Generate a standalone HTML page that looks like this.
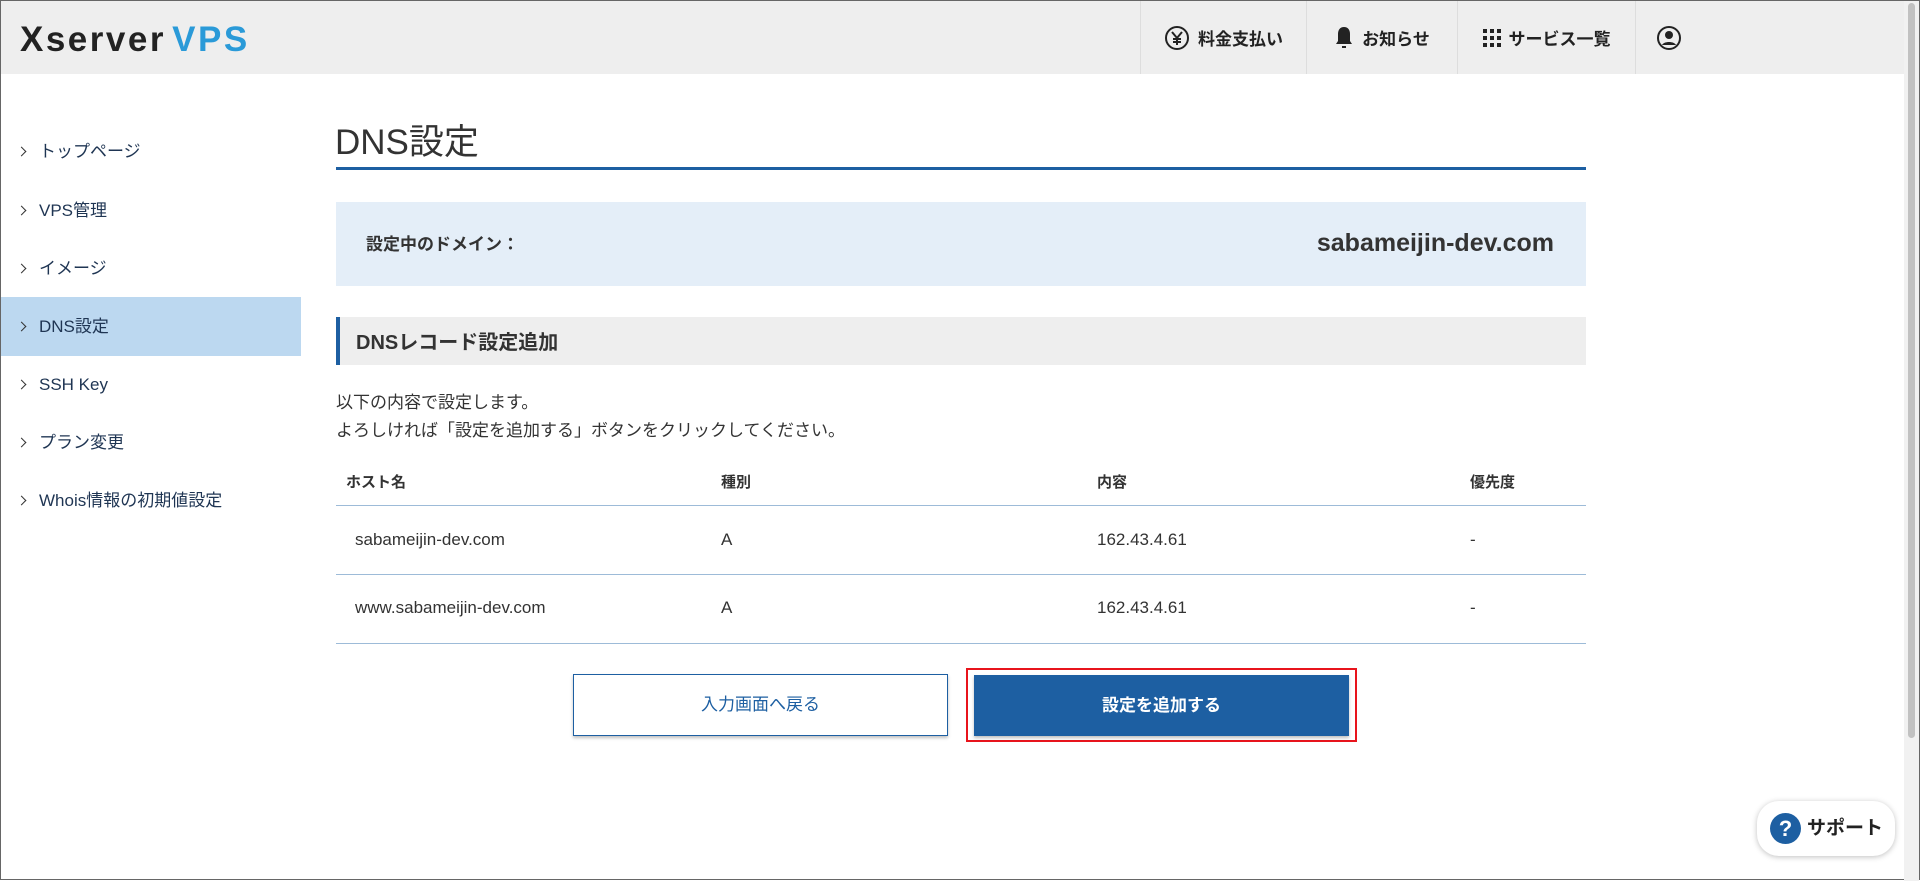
<!DOCTYPE html>
<html><head><meta charset="utf-8"><style>
*{box-sizing:border-box;margin:0;padding:0}
body{width:1920px;height:880px;overflow:hidden;background:#fff;font-family:"Liberation Sans","Noto Sans CJK JP",sans-serif;color:#333;position:relative;border:1px solid #666}
.hdr{position:absolute;left:0;top:0;width:1905px;height:73px;background:#eee}
.logo{position:absolute;left:19px;top:19px;font-size:35px;font-weight:bold;letter-spacing:2.5px;word-spacing:-6px;color:#222}
.logo span{color:#2a9ad8}
.nav{position:absolute;top:0;height:73px;display:flex;align-items:center;justify-content:center;font-size:17px;font-weight:bold;color:#222;border-left:1px solid #ddd}
.nav svg{margin-right:8px}
.scroll{position:absolute;right:0;top:0;width:15px;height:880px;background:#f1f1f1}
.scroll div{position:absolute;left:4px;top:2px;width:7px;height:735px;background:#c1c1c1;border-radius:4px}
.side{position:absolute;left:0;top:0;width:300px}
.si{position:absolute;left:0;width:300px;height:59px;line-height:59px;padding-left:38px;font-size:17px;color:#1f3553}
.si:before{content:"";position:absolute;left:17px;top:26px;width:6px;height:6px;border-right:1.6px solid #333;border-top:1.6px solid #333;transform:rotate(45deg)}
.si.act{background:#bcd8f0}
.t{position:absolute}
</style></head><body>
<div class="hdr">
<div class="logo">Xserver <span>VPS</span></div>
<div class="nav" style="left:1139px;width:166px"><svg width="26" height="26" viewBox="0 0 26 26"><circle cx="13" cy="13" r="11" fill="none" stroke="#222" stroke-width="2"/><path d="M8 7l5 6 5-6M13 13v7M9 14h8M9 17h8" fill="none" stroke="#222" stroke-width="2"/></svg>料金支払い</div>
<div class="nav" style="left:1305px;width:151px"><svg width="20" height="24" viewBox="0 0 20 24"><path d="M10 1c-4 0-6 3-6 7v7l-2 3h16l-2-3V8c0-4-2-7-6-7zM8 20h4v2H8z" fill="#222"/></svg>お知らせ</div>
<div class="nav" style="left:1456px;width:178px"><svg width="18" height="18" viewBox="0 0 18 18" fill="#222"><rect x="0" y="0" width="4" height="4"/><rect x="7" y="0" width="4" height="4"/><rect x="14" y="0" width="4" height="4"/><rect x="0" y="7" width="4" height="4"/><rect x="7" y="7" width="4" height="4"/><rect x="14" y="7" width="4" height="4"/><rect x="0" y="14" width="4" height="4"/><rect x="7" y="14" width="4" height="4"/><rect x="14" y="14" width="4" height="4"/></svg>サービス一覧</div>
<div class="nav" style="left:1634px;width:74px"><svg width="26" height="26" viewBox="0 0 26 26"><circle cx="13" cy="13" r="11" fill="none" stroke="#222" stroke-width="2"/><circle cx="13" cy="10" r="4" fill="#222"/><path d="M6 20c2-4 12-4 14 0" fill="#222"/></svg></div>
</div>
<div class="scroll"><div></div></div>
<div class="side">
<div class="si" style="top:121px">トップページ</div>
<div class="si" style="top:180px">VPS管理</div>
<div class="si" style="top:238px">イメージ</div>
<div class="si act" style="top:296px">DNS設定</div>
<div class="si" style="top:354px">SSH Key</div>
<div class="si" style="top:412px">プラン変更</div>
<div class="si" style="top:470px">Whois情報の初期値設定</div>
</div>
<div class="t" style="left:334px;top:113px;font-size:35px;color:#333">DNS設定</div>
<div class="t" style="left:335px;top:166px;width:1250px;height:3px;background:#1d5fa2"></div>
<div class="t" style="left:335px;top:201px;width:1250px;height:84px;background:#e4eef8"></div>
<div class="t" style="left:365px;top:229px;font-size:17px;font-weight:bold">設定中のドメイン：</div>
<div class="t" style="right:365px;top:228px;font-size:25px;font-weight:bold;color:#333">sabameijin-dev.com</div>
<div class="t" style="left:335px;top:316px;width:1250px;height:48px;background:#eee;border-left:4px solid #1d5fa2"></div>
<div class="t" style="left:355px;top:325px;font-size:20px;font-weight:bold">DNSレコード設定追加</div>
<div class="t" style="left:335px;top:388px;font-size:17px;line-height:28px">以下の内容で設定します。<br>よろしければ「設定を追加する」ボタンをクリックしてください。</div>
<div class="t" style="left:345px;top:470px;font-size:15px;font-weight:bold">ホスト名</div>
<div class="t" style="left:720px;top:470px;font-size:15px;font-weight:bold">種別</div>
<div class="t" style="left:1096px;top:470px;font-size:15px;font-weight:bold">内容</div>
<div class="t" style="left:1469px;top:470px;font-size:15px;font-weight:bold">優先度</div>
<div class="t" style="left:335px;top:504px;width:1250px;height:1px;background:#9dbbd8"></div>
<div class="t" style="left:354px;top:529px;font-size:17px">sabameijin-dev.com</div>
<div class="t" style="left:720px;top:529px;font-size:17px">A</div>
<div class="t" style="left:1096px;top:529px;font-size:17px">162.43.4.61</div>
<div class="t" style="left:1469px;top:529px;font-size:17px">-</div>
<div class="t" style="left:335px;top:573px;width:1250px;height:1px;background:#9dbbd8"></div>
<div class="t" style="left:354px;top:597px;font-size:17px">www.sabameijin-dev.com</div>
<div class="t" style="left:720px;top:597px;font-size:17px">A</div>
<div class="t" style="left:1096px;top:597px;font-size:17px">162.43.4.61</div>
<div class="t" style="left:1469px;top:597px;font-size:17px">-</div>
<div class="t" style="left:335px;top:642px;width:1250px;height:1px;background:#9dbbd8"></div>
<div class="t" style="left:572px;top:673px;width:375px;height:62px;border:1px solid #1d5fa2;background:#fff;box-shadow:0 2px 3px rgba(0,0,0,.25);color:#1d5fa2;font-size:17px;text-align:center;line-height:60px">入力画面へ戻る</div>
<div class="t" style="left:965px;top:667px;width:391px;height:74px;border:2px solid #e8141c"></div>
<div class="t" style="left:973px;top:674px;width:375px;height:61px;background:#1d5fa2;box-shadow:0 2px 3px rgba(0,0,0,.25);color:#fff;font-size:17px;font-weight:bold;text-align:center;line-height:61px">設定を追加する</div>
<div class="t" style="left:1756px;top:800px;width:138px;height:55px;background:#fff;border-radius:22px;box-shadow:0 1px 6px rgba(0,0,0,.25);font-size:19px;font-weight:bold;color:#222;line-height:55px;padding-left:50px"><span style="position:absolute;left:13px;top:12px;width:31px;height:31px;border-radius:50%;background:#1d5fa2;color:#fff;text-align:center;line-height:31px;font-size:22px">?</span>サポート</div>
</body></html>
